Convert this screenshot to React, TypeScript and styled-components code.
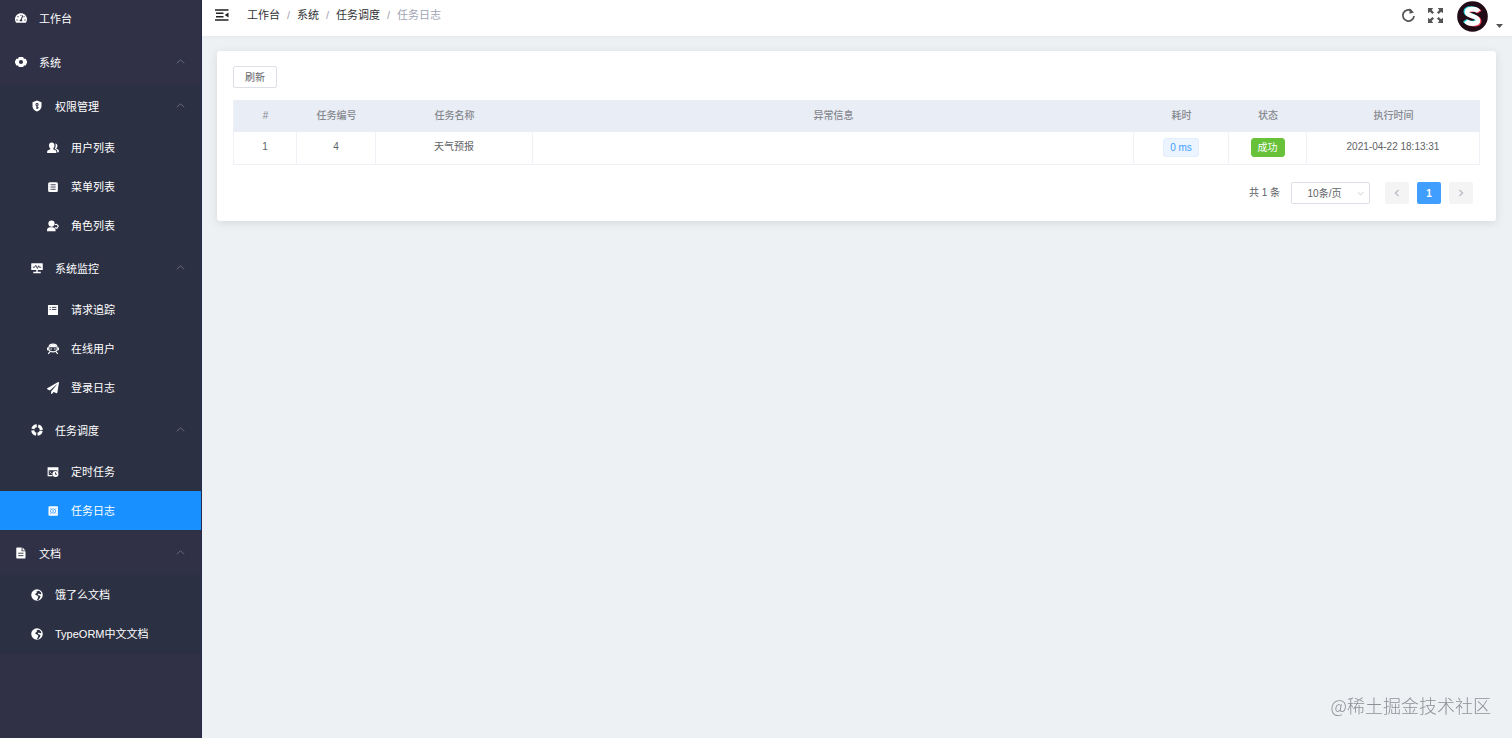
import React from "react";
import styled, { createGlobalStyle, css } from "styled-components";
import { FaPaperPlane, FaTachometerAlt } from "react-icons/fa";

const GlobalStyle = createGlobalStyle`
  * { box-sizing: border-box; }
  body {
    margin: 0;
    background: #edf1f4;
    color: #606266;
    font-family: "Liberation Sans", Arial, "Noto Sans CJK SC", sans-serif;
    font-size: 11px;
  }
  button, select { font-family: inherit; margin: 0; }
  svg { display: block; flex: none; }
`;

const Layout = styled.div`
  display: flex;
  min-height: 100vh;
`;

/* ---------- Sidebar ---------- */

const Sidebar = styled.nav`
  flex: none;
  width: 202px;
  background: #303146;
  border-right: 1px solid #252a4a;
  overflow: hidden;
`;

const MenuList = styled.ul`
  list-style: none;
  margin: 0;
  padding: 0;
`;

const SubMenu = styled(MenuList)`
  background: #2c3043;
`;

const LeafMenu = styled(SubMenu)`
  padding-bottom: 1px;
`;

const entry = css<{ $level: number }>`
  display: flex;
  align-items: center;
  gap: 12px;
  width: 100%;
  padding: 0 16px 0 ${(p) => p.$level * 16 - 1}px;
  border: 0;
  color: #fff;
  font-size: 11px;
  line-height: 16px;
  text-align: left;
  text-decoration: none;
  cursor: pointer;
`;

const MenuTitle = styled.button<{ $level: number }>`
  ${entry}
  height: 44px;
  background: transparent;
`;

const MenuLink = styled.a<{ $level: number; $active?: boolean }>`
  ${entry}
  height: 39px;
  background: ${(p) => (p.$active ? "#1890ff" : "transparent")};
`;

const HomeLink = styled(MenuLink)`
  height: 40px;
  padding-bottom: 4px;
`;

const MenuIcon = styled.span`
  display: flex;
  justify-content: center;
  width: 12px;
  svg { width: 12px; height: 12px; }
`;

const MenuLabel = styled.span`
  flex: 1;
  padding-top: 1px;
  white-space: nowrap;
`;

const MenuArrow = styled.span`
  padding-bottom: 2px;
  color: #6c7080;
`;

/* ---------- Header ---------- */

const Main = styled.div`
  flex: 1;
  min-width: 0;
`;

const Header = styled.header`
  display: flex;
  align-items: center;
  height: 36px;
  padding: 0 9px 6px 13px;
  background: #fff;
  box-shadow: 0 1px 3px rgba(0, 21, 41, 0.04);
`;

const IconButton = styled.button`
  display: flex;
  padding: 0;
  border: 0;
  background: transparent;
  color: #555;
  cursor: pointer;
`;

const Breadcrumb = styled.ol`
  display: flex;
  flex: 1;
  list-style: none;
  margin: 0 0 0 18px;
  padding: 0;
  line-height: 16px;
  color: #9fa3b4;
`;

const Crumb = styled.li`
  display: flex;
  white-space: nowrap;
  & + &::before {
    content: "/";
    width: 17px;
    text-align: center;
    color: #a0a4ae;
  }
  a { color: #303133; text-decoration: none; }
`;

const Tools = styled.div`
  display: flex;
  align-items: center;
  gap: 12px;
`;

const UserButton = styled(IconButton)`
  align-items: flex-end;
  gap: 8px;
  margin: 2px 0 0 2px;
`;

const AvatarArt = styled.svg`
  width: 31px;
  height: 31px;
`;

const UserCaret = styled.svg`
  width: 7px;
  height: 4px;
  margin-bottom: 4px;
`;

/* ---------- Content ---------- */

const Content = styled.main`
  padding: 15px 16px 15px 15px;
`;

const Card = styled.section`
  padding: 15px 16px 17px;
  border-radius: 3px;
  background: #fff;
  box-shadow: 0 2px 10px rgba(0, 0, 0, 0.1);
`;

const RefreshButton = styled.button`
  display: block;
  width: 44px;
  height: 22px;
  padding: 1px 0 0;
  border: 1px solid #dcdfe6;
  border-radius: 2px;
  background: #fff;
  color: #606266;
  font-size: 10px;
  line-height: 20px;
  cursor: pointer;
`;

const Table = styled.table`
  width: 100%;
  margin-top: 12px;
  border-spacing: 0;
  table-layout: fixed;
  border-left: 1px solid #eff1f6;
  font-size: 10px;
  line-height: 16px;
  text-align: center;
`;

const HeadCell = styled.th<{ $width?: number }>`
  width: ${(p) => (p.$width ? `${p.$width}px` : "auto")};
  height: 32px;
  padding: 0;
  background: #e9edf5;
  color: #85888e;
  font-weight: 500;
`;

const Cell = styled.td`
  height: 33px;
  padding: 0 0 2px;
  border-right: 1px solid #eff1f6;
  border-bottom: 1px solid #eff1f6;
  color: #606266;
`;

const Tag = styled.span<{ $solid?: boolean }>`
  display: inline-block;
  height: 19px;
  padding: 0 6px;
  border: 1px solid ${(p) => (p.$solid ? "#67c23a" : "#e2eefd")};
  border-radius: 3px;
  background: ${(p) => (p.$solid ? "#67c23a" : "#ecf5ff")};
  color: ${(p) => (p.$solid ? "#fff" : "#409eff")};
  line-height: 17px;
  vertical-align: middle;
`;

const Pagination = styled.div`
  display: flex;
  align-items: center;
  justify-content: flex-end;
  gap: 8px;
  margin-top: 17px;
  padding-right: 7px;
  font-size: 10px;
`;

const Total = styled.span`
  margin-right: 3px;
  line-height: 16px;
`;

const SizePicker = styled.label`
  display: grid;
  align-items: center;
  width: 79px;
  height: 22px;
  margin-right: 7px;
  color: #b4b8c0;
  & > * { grid-area: 1 / 1; }
  svg {
    justify-self: end;
    margin-right: 6px;
    pointer-events: none;
  }
`;

const SizeSelect = styled.select`
  width: 100%;
  height: 22px;
  padding: 0 20px 0 8px;
  appearance: none;
  border: 1px solid #dcdfe6;
  border-radius: 2px;
  background: #fff;
  color: #606266;
  font-size: 10px;
  text-align: center;
  text-align-last: center;
`;

const PageButton = styled.button<{ $active?: boolean }>`
  display: flex;
  align-items: center;
  justify-content: center;
  width: 24px;
  height: 22px;
  padding: 0;
  border: 0;
  border-radius: 2px;
  background: ${(p) => (p.$active ? "#409eff" : "#f4f4f5")};
  color: ${(p) => (p.$active ? "#fff" : "#b4b8c0")};
  font-size: 10px;
  font-weight: 700;
`;

const Watermark = styled.div`
  position: fixed;
  right: 21px;
  bottom: 21px;
  color: #8d9094;
  font-family: "Noto Sans CJK SC", sans-serif;
  font-size: 18px;
  font-weight: 300;
  line-height: 24px;
  pointer-events: none;
`;

/* ---------- Icons ---------- */

const Glyph = ({ children }: { children: React.ReactNode }) => (
  <svg viewBox="0 0 16 16" fill="currentColor" aria-hidden="true">
    {children}
  </svg>
);

const GearIcon = () => (
  <Glyph>
    <path
      fillRule="evenodd"
      d="M5.200 1.300h5.600l1.100 2.200h2.300L16 7v2l-1.800 3.500h-2.300l-1.100 2.200H5.200l-1.100-2.200H1.800L0 9V7l1.800-3.500h2.300l1.100-2.200ZM8 5.300a2.700 2.700 0 1 0 0 5.400 2.700 2.700 0 0 0 0-5.400Z"
    />
  </Glyph>
);

const FileIcon = () => (
  <Glyph>
    <path d="M2.500.8h6.300v4.900h5.200v8.700a.8.8 0 0 1-.8.800H2.500a.8.8 0 0 1-.8-.8V1.600a.8.8 0 0 1 .8-.8ZM10 .8l4 3.800h-4V.8Z" />
    <path d="M4.300 8.300h7M4.300 11.500h7" stroke="#303146" strokeWidth="1.200" />
  </Glyph>
);

const EarthIcon = () => (
  <Glyph>
    <circle cx="8" cy="8" r="7.700" />
    <path
      d="M9.300 2.200 7.300 3.800l.6 1.300-2 1.300-.2 1.300 2.400.8 1.700 1.700-.8 2.300-1.400 2.600 2.200-.6 2-2.400 1-2.200-1.500-1.300-1.700-.4-.6-1.300 1.300-.8 1.900.8 1.600-.4-.8-2.200-1.900-1.600-1.800-.5Z"
      fill="#2c3043"
    />
  </Glyph>
);

const ShieldIcon = () => (
  <Glyph>
    <path
      fillRule="evenodd"
      d="M8 .8 14 3v5.500c0 3-2.600 5.400-6 6.900-3.400-1.500-6-3.900-6-6.900V3L8 .8Zm0 3.200a2.200 2.200 0 0 0-.8 4.200V12h1.700v-1h1.300V9.700H8.900V8.200A2.200 2.200 0 0 0 8 4Zm0 1.400a.8.8 0 1 1 0 1.600.8.8 0 0 1 0-1.600Z"
    />
  </Glyph>
);

const UsersIcon = () => (
  <Glyph>
    <path d="M6.300.8c2.200 0 3.700 1.600 3.700 3.900 0 1.700-.7 3-1.700 3.800v1l3 1.500c.8.400 1.200 1 1.200 1.900v1.600H.2v-1.600c0-.9.4-1.500 1.200-1.900l3-1.500v-1C3.300 7.700 2.600 6.400 2.600 4.700 2.600 2.400 4.100.8 6.300.8Z" />
    <path d="M11 2c1.700.1 2.900 1.400 2.900 3.200 0 1.300-.5 2.300-1.300 3v.8l2.100 1.100c.7.400 1.100.9 1.100 1.700v1.700h-2.200v-.8c0-1.300-.6-2.200-1.700-2.700l-1.700-.9c.9-1.100 1.400-2.600 1.400-4.300 0-1.100-.2-2-.6-2.800Z" />
  </Glyph>
);

const ListIcon = () => (
  <Glyph>
    <rect x="1.500" y="1.500" width="13" height="13" rx="2" />
    <path d="M5.500 5h6M5.500 8h6M5.500 11h6M3.800 5h.8M3.800 8h.8M3.800 11h.8" stroke="#2c3043" strokeWidth="1.200" />
  </Glyph>
);

const RoleIcon = () => (
  <Glyph>
    <circle cx="6" cy="4.800" r="4.200" />
    <path d="M0 15v-1.500c0-2.400 2-4 4.200-4h3c2 0 4.200 1.600 4.200 4V15H0Z" />
    <path d="m10.500 6.300 2.300-.6 2.300 2.300-2 3-2.600-.8" fill="none" stroke="currentColor" strokeWidth="1.500" />
  </Glyph>
);

const MonitorIcon = () => (
  <Glyph>
    <path d="M1 1.500h14a.7.7 0 0 1 .7.700v8.600H.3V2.200a.7.7 0 0 1 .7-.7ZM7 10.500h2v2.500h4V15H3v-2h4v-2.500Z" />
    <path d="M2.500 7h2.300l1.500-2.500L8.500 8.500 10.200 5l1 2h2.300" fill="none" stroke="#2c3043" strokeWidth="1.200" />
  </Glyph>
);

const TraceIcon = () => (
  <Glyph>
    <rect x="1.300" y="1.300" width="13.400" height="13.400" rx=".8" />
    <path d="M3.500 4.500H5M6.500 4.500h6M3.500 7.300H5M6.500 7.300h6" stroke="#2c3043" strokeWidth="1.200" />
  </Glyph>
);

const OnlineIcon = () => (
  <Glyph>
    <path d="M2.500 9.500V6.500c0-3 2.400-5 5.500-5s5.500 2 5.500 5v3c-1.300 1.600-3.200 2.400-5.500 2.400s-4.200-.8-5.500-2.400Z" fill="none" stroke="currentColor" strokeWidth="1.500" />
    <path d="M3 5.800C3.500 3.300 5.500 2 8 2s4.500 1.300 5 3.800H3ZM0 6h2v3.500H0V6ZM14 6h2v3.500h-2V6Z" />
    <path d="m4 11.500-2.300 3M12 11.500l2.300 3" stroke="currentColor" strokeWidth="1.500" />
    <circle cx="5.500" cy="8" r="1" />
    <circle cx="10.500" cy="8" r="1" />
  </Glyph>
);

const RingIcon = () => (
  <Glyph>
    <circle cx="8" cy="8" r="5.700" fill="none" stroke="currentColor" strokeWidth="4" strokeDasharray="6.950 2" strokeDashoffset="-1" />
  </Glyph>
);

const ScheduleIcon = () => (
  <Glyph>
    <path fillRule="evenodd" d="M.8 1.500h14.400v6h-1.500v-2H2.300V12h5v1.500H.8v-12Z" />
    <path d="m3.500 7.300 1.500 1.300-1.500 1.300M6 10.200h1.500" fill="none" stroke="currentColor" />
    <circle cx="11.300" cy="10.800" r="4" />
    <path d="M11.300 8.500v2.600h2" fill="none" stroke="#2c3043" strokeWidth="1.200" />
  </Glyph>
);

const TaskLogIcon = () => (
  <Glyph>
    <rect x="2" y="1.800" width="12.500" height="12.500" rx="1" />
    <path d="M4 4.500h1M11.500 4.500h1M4 11.500h1M11.500 11.500h1" stroke="#1890ff" />
    <ellipse cx="8.200" cy="8" rx="3.600" ry="2.800" fill="none" stroke="#1890ff" />
    <circle cx="8.200" cy="8" r="1" fill="#1890ff" />
  </Glyph>
);

const Chevron = ({ d, size, width = 1 }: { d: string; size: number; width?: number }) => (
  <svg width={size} height={size} viewBox="0 0 10 10" fill="none" stroke="currentColor" strokeWidth={width} aria-hidden="true">
    <path d={d} />
  </svg>
);

const UP = "M1 7l4-4 4 4";
const DOWN = "M1 3l4 4 4-4";
const LEFT = "M7 1L3 5l4 4";
const RIGHT = "M3 1l4 4-4 4";

const FoldIcon = () => (
  <svg width="14" height="12" viewBox="0 0 14 12" aria-hidden="true">
    <path d="M0 1h13.500M1 4.300h7.500M1 7.700h7.500M0 11h13.500" stroke="#222" strokeWidth="1.500" />
    <path d="M13.500 3.500v5L9.800 6l3.700-2.500Z" fill="#222" />
  </svg>
);

const ReloadIcon = () => (
  <svg width="15" height="15" viewBox="0 0 15 15" fill="none" aria-hidden="true">
    <path d="M10.500 2.800A5.600 5.600 0 1 0 13 8" stroke="#555" strokeWidth="1.800" />
    <path d="M8.500.3v5.500l4.500-1.300L8.500.3Z" fill="#555" />
  </svg>
);

const FullscreenIcon = () => (
  <svg width="15" height="15" viewBox="0 0 15 15" fill="#555" aria-hidden="true">
    <path d="M0 0h5.200L3.700 1.900 6 4.400 4.400 6 1.900 3.700 0 5.200V0ZM15 0v5.200l-1.900-1.500L10.600 6 9 4.400l2.300-2.500L9.800 0H15ZM0 15V9.800l1.900 1.500L4.400 9 6 10.600l-2.300 2.500L5.200 15H0ZM15 15H9.800l1.500-1.900L9 10.600 10.600 9l2.500 2.300L15 9.800V15Z" />
  </svg>
);

const S_CURVE = "M21.500 10.500C19.500 7.500 10 6.800 10 11.300c0 4.500 11 3.200 11 8 0 4.700-9.500 4-12 .7";

const Avatar = () => (
  <AvatarArt viewBox="0 0 31 31" fill="none" role="img" aria-label="S">
    <circle cx="15.500" cy="15.500" r="15.300" fill="#210b17" />
    <g strokeWidth="4.600">
      <path d={S_CURVE} stroke="#f0405c" transform="translate(1.200 .6)" />
      <path d={S_CURVE} stroke="#25d5e4" transform="translate(-1.200 -.6)" />
      <path d={S_CURVE} stroke="#fff" />
    </g>
  </AvatarArt>
);

/* ---------- Menu data ---------- */

interface MenuNode {
  label: string;
  icon: React.ReactNode;
  active?: boolean;
  children?: MenuNode[];
}

const menu: MenuNode[] = [
  {
    label: "系统",
    icon: <GearIcon />,
    children: [
      {
        label: "权限管理",
        icon: <ShieldIcon />,
        children: [
          { label: "用户列表", icon: <UsersIcon /> },
          { label: "菜单列表", icon: <ListIcon /> },
          { label: "角色列表", icon: <RoleIcon /> },
        ],
      },
      {
        label: "系统监控",
        icon: <MonitorIcon />,
        children: [
          { label: "请求追踪", icon: <TraceIcon /> },
          { label: "在线用户", icon: <OnlineIcon /> },
          { label: "登录日志", icon: <FaPaperPlane /> },
        ],
      },
      {
        label: "任务调度",
        icon: <RingIcon />,
        children: [
          { label: "定时任务", icon: <ScheduleIcon /> },
          { label: "任务日志", icon: <TaskLogIcon />, active: true },
        ],
      },
    ],
  },
  {
    label: "文档",
    icon: <FileIcon />,
    children: [
      { label: "饿了么文档", icon: <EarthIcon /> },
      { label: "TypeORM中文文档", icon: <EarthIcon /> },
    ],
  },
];

const MenuEntry = ({ node, level }: { node: MenuNode; level: number }) => {
  if (!node.children) {
    return (
      <li>
        <MenuLink href="#" $level={level} $active={node.active} aria-current={node.active ? "page" : undefined}>
          <MenuIcon>{node.icon}</MenuIcon>
          <MenuLabel>{node.label}</MenuLabel>
        </MenuLink>
      </li>
    );
  }
  const List = node.children.some((child) => child.children) ? SubMenu : LeafMenu;
  return (
    <li>
      <MenuTitle type="button" $level={level} aria-expanded="true">
        <MenuIcon>{node.icon}</MenuIcon>
        <MenuLabel>{node.label}</MenuLabel>
        <MenuArrow>
          <Chevron d={UP} size={9} />
        </MenuArrow>
      </MenuTitle>
      <List>
        {node.children.map((child) => (
          <MenuEntry key={child.label} node={child} level={level + 1} />
        ))}
      </List>
    </li>
  );
};

const columns: { title: string; width?: number }[] = [
  { title: "#", width: 63 },
  { title: "任务编号", width: 79 },
  { title: "任务名称", width: 157 },
  { title: "异常信息" },
  { title: "耗时", width: 95 },
  { title: "状态", width: 78 },
  { title: "执行时间", width: 173 },
];

export default function App() {
  return (
    <>
      <GlobalStyle />
      <Layout>
        <Sidebar>
          <MenuList>
            <li>
              <HomeLink href="#" $level={1}>
                <MenuIcon><FaTachometerAlt /></MenuIcon>
                <MenuLabel>工作台</MenuLabel>
              </HomeLink>
            </li>
            {menu.map((node) => (
              <MenuEntry key={node.label} node={node} level={1} />
            ))}
          </MenuList>
        </Sidebar>

        <Main>
          <Header>
            <IconButton type="button" aria-label="折叠菜单"><FoldIcon /></IconButton>
            <Breadcrumb>
              <Crumb><a href="#">工作台</a></Crumb>
              <Crumb><a href="#">系统</a></Crumb>
              <Crumb><a href="#">任务调度</a></Crumb>
              <Crumb>任务日志</Crumb>
            </Breadcrumb>
            <Tools>
              <IconButton type="button" aria-label="重新加载"><ReloadIcon /></IconButton>
              <IconButton type="button" aria-label="全屏"><FullscreenIcon /></IconButton>
              <UserButton type="button" aria-label="用户菜单">
                <Avatar />
                <UserCaret viewBox="0 0 7 4" fill="#555"><path d="M0 0h7L3.500 4Z" /></UserCaret>
              </UserButton>
            </Tools>
          </Header>

          <Content>
            <Card>
              <RefreshButton type="button">刷新</RefreshButton>
              <Table>
                <thead>
                  <tr>
                    {columns.map((c) => (
                      <HeadCell key={c.title} $width={c.width} scope="col">{c.title}</HeadCell>
                    ))}
                  </tr>
                </thead>
                <tbody>
                  <tr>
                    <Cell>1</Cell>
                    <Cell>4</Cell>
                    <Cell>天气预报</Cell>
                    <Cell />
                    <Cell><Tag>0 ms</Tag></Cell>
                    <Cell><Tag $solid>成功</Tag></Cell>
                    <Cell>2021-04-22 18:13:31</Cell>
                  </tr>
                </tbody>
              </Table>
              <Pagination>
                <Total>共 1 条</Total>
                <SizePicker>
                  <SizeSelect aria-label="每页条数" defaultValue="10">
                    <option value="10">10条/页</option>
                    <option value="20">20条/页</option>
                    <option value="50">50条/页</option>
                  </SizeSelect>
                  <Chevron d={DOWN} size={7} />
                </SizePicker>
                <PageButton type="button" disabled aria-label="上一页"><Chevron d={LEFT} size={8} width={1.5} /></PageButton>
                <PageButton type="button" $active aria-current="page">1</PageButton>
                <PageButton type="button" disabled aria-label="下一页"><Chevron d={RIGHT} size={8} width={1.5} /></PageButton>
              </Pagination>
            </Card>
          </Content>
        </Main>
      </Layout>
      <Watermark>@稀土掘金技术社区</Watermark>
    </>
  );
}
